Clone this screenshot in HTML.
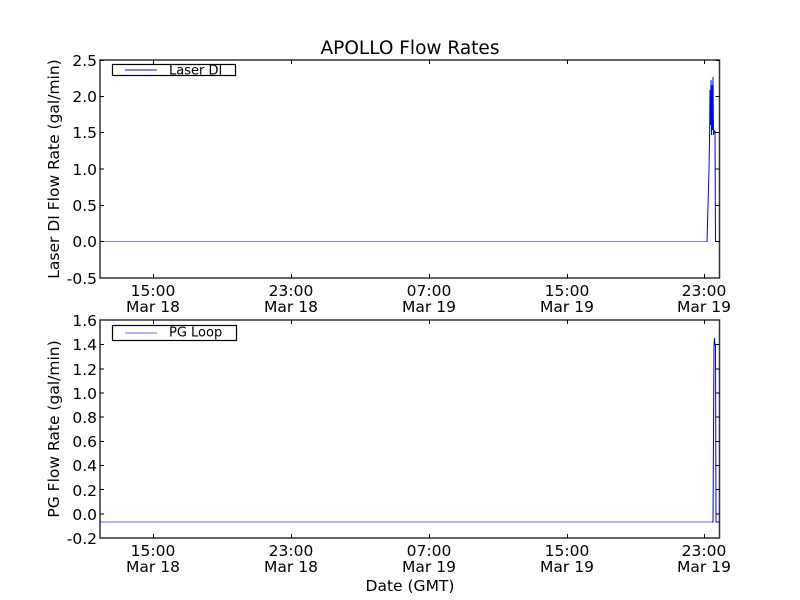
<!DOCTYPE html>
<html><head><meta charset="utf-8"><style>
html,body{margin:0;padding:0;background:#fff;}
svg{display:block;}
text{font-family:"DejaVu Sans","Liberation Sans",sans-serif;fill:#000;}
</style></head><body>
<svg width="800" height="600" viewBox="0 0 800 600" xmlns="http://www.w3.org/2000/svg">
<rect width="800" height="600" fill="#fff"/>
<text x="410" y="54" font-size="18.5" text-anchor="middle">APOLLO Flow Rates</text>

<!-- Top axes -->
<g>
<polyline points="100,241.5 708,241.5" fill="none" stroke="#8080ff" stroke-width="1"/>
<polyline points="707,241.5 709,170 709.5,141 710,90 710.5,125 711,80 711.5,135 712,85 712.5,130 713,77 713.5,135 714,130 714.5,132 715,131 715.5,241.5 719,241.5" fill="none" stroke="#0000ff" stroke-width="1"/>
<rect x="100" y="60" width="619.5" height="218" fill="none" stroke="#333" stroke-width="1.5"/>
<g stroke="#000" stroke-width="1">
<line x1="100" y1="60.5" x2="104" y2="60.5"/><line x1="715.5" y1="60.5" x2="719.5" y2="60.5"/>
<line x1="100" y1="96.5" x2="104" y2="96.5"/><line x1="715.5" y1="96.5" x2="719.5" y2="96.5"/>
<line x1="100" y1="132.5" x2="104" y2="132.5"/><line x1="715.5" y1="132.5" x2="719.5" y2="132.5"/>
<line x1="100" y1="169" x2="104" y2="169"/><line x1="715.5" y1="169" x2="719.5" y2="169"/>
<line x1="100" y1="205.5" x2="104" y2="205.5"/><line x1="715.5" y1="205.5" x2="719.5" y2="205.5"/>
<line x1="100" y1="241.5" x2="104" y2="241.5"/><line x1="715.5" y1="241.5" x2="719.5" y2="241.5"/>
<line x1="153.5" y1="60" x2="153.5" y2="64"/><line x1="153.5" y1="274" x2="153.5" y2="278"/>
<line x1="291.5" y1="60" x2="291.5" y2="64"/><line x1="291.5" y1="274" x2="291.5" y2="278"/>
<line x1="429.5" y1="60" x2="429.5" y2="64"/><line x1="429.5" y1="274" x2="429.5" y2="278"/>
<line x1="567.5" y1="60" x2="567.5" y2="64"/><line x1="567.5" y1="274" x2="567.5" y2="278"/>
<line x1="704.5" y1="60" x2="704.5" y2="64"/><line x1="704.5" y1="274" x2="704.5" y2="278"/>
</g>
<g font-size="15.5" text-anchor="end">
<text x="97" y="66">2.5</text><text x="97" y="102">2.0</text><text x="97" y="138">1.5</text>
<text x="97" y="175">1.0</text><text x="97" y="211">0.5</text><text x="97" y="247">0.0</text><text x="97" y="284">-0.5</text>
</g>
<g font-size="15.5" text-anchor="middle">
<text x="153" y="296">15:00</text><text x="153" y="312">Mar 18</text>
<text x="291" y="296">23:00</text><text x="291" y="312">Mar 18</text>
<text x="429" y="296">07:00</text><text x="429" y="312">Mar 19</text>
<text x="567" y="296">15:00</text><text x="567" y="312">Mar 19</text>
<text x="704" y="296">23:00</text><text x="704" y="312">Mar 19</text>
</g>
<text transform="translate(59,169) rotate(-90)" font-size="15.5" text-anchor="middle">Laser DI Flow Rate (gal/min)</text>
<rect x="112.5" y="64.5" width="123" height="11" fill="#fff" stroke="#000" stroke-width="1.2"/>
<line x1="125" y1="70" x2="157" y2="70" stroke="#0000ff"/>
<text x="169" y="74.5" font-size="13">Laser DI</text>
</g>

<!-- Bottom axes -->
<g>
<polyline points="100,522 713,522" fill="none" stroke="#6060ff" stroke-width="1"/>
<polyline points="712,522 713,522 714,345 714.5,338 715,345 715.5,345 716,522 719,522" fill="none" stroke="#0000ff" stroke-width="1"/>
<rect x="100" y="320" width="619.5" height="218" fill="none" stroke="#333" stroke-width="1.5"/>
<g stroke="#000" stroke-width="1">
<line x1="100" y1="344.5" x2="104" y2="344.5"/><line x1="715.5" y1="344.5" x2="719.5" y2="344.5"/>
<line x1="100" y1="369" x2="104" y2="369"/><line x1="715.5" y1="369" x2="719.5" y2="369"/>
<line x1="100" y1="393" x2="104" y2="393"/><line x1="715.5" y1="393" x2="719.5" y2="393"/>
<line x1="100" y1="417" x2="104" y2="417"/><line x1="715.5" y1="417" x2="719.5" y2="417"/>
<line x1="100" y1="441.5" x2="104" y2="441.5"/><line x1="715.5" y1="441.5" x2="719.5" y2="441.5"/>
<line x1="100" y1="465.5" x2="104" y2="465.5"/><line x1="715.5" y1="465.5" x2="719.5" y2="465.5"/>
<line x1="100" y1="489.5" x2="104" y2="489.5"/><line x1="715.5" y1="489.5" x2="719.5" y2="489.5"/>
<line x1="100" y1="514" x2="104" y2="514"/><line x1="715.5" y1="514" x2="719.5" y2="514"/>
<line x1="153.5" y1="320" x2="153.5" y2="324"/><line x1="153.5" y1="534" x2="153.5" y2="538"/>
<line x1="291.5" y1="320" x2="291.5" y2="324"/><line x1="291.5" y1="534" x2="291.5" y2="538"/>
<line x1="429.5" y1="320" x2="429.5" y2="324"/><line x1="429.5" y1="534" x2="429.5" y2="538"/>
<line x1="567.5" y1="320" x2="567.5" y2="324"/><line x1="567.5" y1="534" x2="567.5" y2="538"/>
<line x1="704.5" y1="320" x2="704.5" y2="324"/><line x1="704.5" y1="534" x2="704.5" y2="538"/>
</g>
<g font-size="15.5" text-anchor="end">
<text x="97" y="326">1.6</text><text x="97" y="350">1.4</text><text x="97" y="375">1.2</text>
<text x="97" y="399">1.0</text><text x="97" y="423">0.8</text><text x="97" y="447">0.6</text>
<text x="97" y="471">0.4</text><text x="97" y="496">0.2</text><text x="97" y="520">0.0</text><text x="97" y="544">-0.2</text>
</g>
<g font-size="15.5" text-anchor="middle">
<text x="153" y="556">15:00</text><text x="153" y="572">Mar 18</text>
<text x="291" y="556">23:00</text><text x="291" y="572">Mar 18</text>
<text x="429" y="556">07:00</text><text x="429" y="572">Mar 19</text>
<text x="567" y="556">15:00</text><text x="567" y="572">Mar 19</text>
<text x="704" y="556">23:00</text><text x="704" y="572">Mar 19</text>
</g>
<text x="410" y="591" font-size="15.5" text-anchor="middle">Date (GMT)</text>
<text transform="translate(59,429) rotate(-90)" font-size="15.5" text-anchor="middle">PG Flow Rate (gal/min)</text>
<rect x="112.5" y="325.5" width="124" height="15" fill="#fff" stroke="#000" stroke-width="1.2"/>
<line x1="125" y1="333" x2="157" y2="333" stroke="#9999ff" stroke-width="1.5"/>
<text x="169" y="336.5" font-size="13">PG Loop</text>
</g>
</svg>
</body></html>
